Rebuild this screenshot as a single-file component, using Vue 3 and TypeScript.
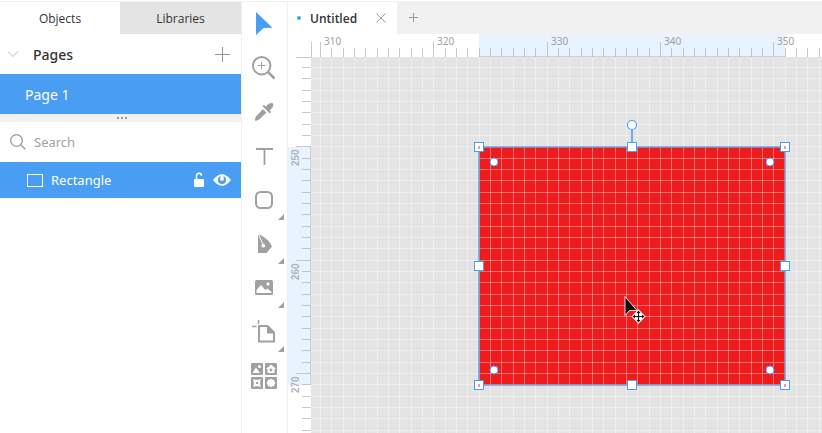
<script setup lang="ts">
import { computed, onBeforeUnmount, onMounted, ref } from 'vue'

interface Tick {
  pos: number
  major: boolean
  label: number
}

const STEP = 11.335
const RULER = 23
const LABEL_ROOM = 22
const search = ref('')
const panel = ref<'objects' | 'libraries'>('objects')

const workspace = ref<SVGSVGElement | null>(null)
const size = ref({ width: 0, height: 0 })
let observer: ResizeObserver | undefined

function measure() {
  const box = workspace.value?.getBoundingClientRect()
  if (box) size.value = { width: box.width, height: box.height }
}

onMounted(() => {
  measure()
  observer = new ResizeObserver(measure)
  if (workspace.value) observer.observe(workspace.value)
})
onBeforeUnmount(() => observer?.disconnect())

/* Ruler ticks that fit in `length`; `origin` is the pixel at which the value `start` sits. */
function makeTicks(origin: number, start: number, length: number): Tick[] {
  const count = Math.max(0, Math.ceil((length - origin) / STEP))
  return Array.from({ length: count }, (_, i) => ({
    pos: Math.round(origin + i * STEP),
    major: (start + i) % 10 === 0,
    label: start + i,
  }))
}

const columns = computed(() => makeTicks(32, 310, size.value.width))
const rows = computed(() => makeTicks(33, 243, size.value.height))
const columnLabels = computed(() => columns.value.filter((t) => t.major && t.pos + LABEL_ROOM < size.value.width))
const rowLabels = computed(() => rows.value.filter((t) => t.major && t.pos + LABEL_ROOM < size.value.height))

const shape = { x: 191, y: 113, width: 306, height: 238 }
const right = shape.x + shape.width
const bottom = shape.y + shape.height
const midX = shape.x + shape.width / 2
const midY = shape.y + shape.height / 2

const corners = [
  [shape.x, shape.y],
  [right, shape.y],
  [shape.x, bottom],
  [right, bottom],
]
const handles = [...corners, [midX, shape.y], [midX, bottom], [shape.x, midY], [right, midY]]
const radii = [
  [shape.x + 15, shape.y + 15],
  [right - 15, shape.y + 15],
  [shape.x + 15, bottom - 15],
  [right - 15, bottom - 15],
]
</script>

<template>
  <div class="app">
    <aside class="sidebar">
      <div class="panel-tabs">
        <button class="panel-tab" :class="{ active: panel === 'objects' }" @click="panel = 'objects'">Objects</button>
        <button class="panel-tab" :class="{ active: panel === 'libraries' }" @click="panel = 'libraries'">Libraries</button>
      </div>
      <div class="pages-head">
        <button class="icon-button" aria-label="Collapse pages">
          <svg width="12" height="8"><path d="M1 1.500 6 6.500 11 1.500" fill="none" stroke="#bdbdbd" /></svg>
        </button>
        <h2>Pages</h2>
        <button class="icon-button" aria-label="Add page">
          <svg width="15" height="15"><path d="M7.500 0V15M0 7.500H15" stroke="#959595" /></svg>
        </button>
      </div>
      <button class="page-row">Page 1</button>
      <div class="splitter"><i /><i /><i /></div>
      <label class="search">
        <svg width="16" height="16" fill="none" stroke="#9a9a9a" stroke-width="1.300">
          <circle cx="6.500" cy="6.500" r="5.800" /><path d="m10.700 10.700 4.600 4.600" />
        </svg>
        <input v-model="search" type="text" placeholder="Search" aria-label="Search" />
      </label>
      <div class="object-row">
        <svg width="16" height="13"><rect x="0.500" y="0.500" width="15" height="12" fill="none" stroke="#fff" /></svg>
        <span class="object-name">Rectangle</span>
        <button class="icon-button" aria-label="Lock">
          <svg width="12" height="16">
            <rect x="1" y="7" width="10" height="8" rx="1" fill="#fff" />
            <path d="M3.500 7V4Q3.500 1.200 6 1.200T8.500 3.800" fill="none" stroke="#fff" stroke-width="1.500" />
          </svg>
        </button>
        <button class="icon-button" aria-label="Hide">
          <svg width="18" height="12">
            <path d="M0 6Q9-5.500 18 6Q9 17.500 0 6Z" fill="#fff" />
            <circle cx="9" cy="6" r="4" fill="#499df3" />
            <circle cx="9" cy="5" r="1.900" fill="#fff" /><path d="M7.600 1.800h2.800v3H7.600z" fill="#fff" />
          </svg>
        </button>
      </div>
    </aside>

    <nav class="toolbar" aria-label="Tools">
      <button class="tool" aria-label="Select">
        <svg viewBox="0 0 44 44"><path d="M14 10 30.500 25.800 21.500 26 14 33Z" fill="#499df3" /></svg>
      </button>
      <button class="tool" aria-label="Zoom">
        <svg viewBox="0 0 44 44" fill="none" stroke="#a0a0a0">
          <circle cx="19.700" cy="19.700" r="8.700" stroke-width="2" />
          <path d="M19.500 15.500v8M15.500 19.500h8" /><path d="m26 26 6.500 6.500" stroke-width="2.500" />
        </svg>
      </button>
      <button class="tool" aria-label="Pick colour">
        <svg viewBox="0 0 44 44">
          <path d="M20.500 16.300 22 15l1.800 1.500 3.200-3Q30 12.500 31 13.500T30.500 17.500L27.700 20.500 29.200 22 27.800 23.500Z" fill="#a0a0a0" />
          <path d="M22 20.300 16 26.300Q14.500 27.800 14.300 29.700" fill="none" stroke="#a0a0a0" stroke-width="3" />
          <path d="m21.300 19.700 3 3-6.800 6.500-3.700 1.800-.8-.8 1.500-3.700Z" fill="#a0a0a0" />
        </svg>
      </button>
      <button class="tool" aria-label="Text">
        <svg viewBox="0 0 44 44"><path d="M14 14h17v2H23.400V31h-1.800V16H14Z" fill="#a0a0a0" /></svg>
      </button>
      <button class="tool" aria-label="Shape">
        <svg viewBox="0 0 44 44">
          <rect x="14" y="14" width="16" height="16" rx="4.500" fill="none" stroke="#a0a0a0" stroke-width="2" />
          <path d="M42 36v6h-6Z" fill="#a0a0a0" />
        </svg>
      </button>
      <button class="tool" aria-label="Pen">
        <svg viewBox="0 0 44 44">
          <path d="M16 13.500V31h8.500l5.500-6.500Q28 18 17.500 12.500Z" fill="#a0a0a0" />
          <path d="m16.500 12 4.500 11" stroke="#fff" /><circle cx="21.300" cy="23.700" r="1.900" fill="#fff" />
          <path d="M42 36v6h-6Z" fill="#a0a0a0" />
        </svg>
      </button>
      <button class="tool" aria-label="Image">
        <svg viewBox="0 0 44 44">
          <rect x="13" y="14" width="18" height="15" rx="1.500" fill="#a0a0a0" />
          <path d="M14.500 27v-3l4.500-5 4.500 5 2-1.500 4 3.500v1Z" fill="#fff" /><circle cx="26" cy="18" r="1.700" fill="#fff" />
          <path d="M42 36v6h-6Z" fill="#a0a0a0" />
        </svg>
      </button>
      <button class="tool" aria-label="Artboard">
        <svg viewBox="0 0 44 44">
          <path d="M17 16h8.500l6.500 6.500V31.500H17Z" fill="none" stroke="#a0a0a0" stroke-width="2" />
          <path d="M25 15.500v8h8Z" fill="#a0a0a0" /><path d="M16.500 10v4M10 16.500h4.500" stroke="#a0a0a0" stroke-width="1.500" />
          <path d="M42 36v6h-6Z" fill="#a0a0a0" />
        </svg>
      </button>
      <button class="tool" aria-label="Resources">
        <svg viewBox="0 0 44 44">
          <g fill="#a0a0a0">
            <rect x="9" y="9" width="12" height="12" rx="1" /><rect x="23" y="9" width="12" height="12" rx="1" />
            <rect x="9" y="23" width="12" height="12" rx="1" /><rect x="23" y="23" width="12" height="12" rx="1" />
          </g>
          <g fill="#fff">
            <path d="m10.500 19 3.500-5.500 4 5.500Z" /><circle cx="17.500" cy="12.500" r="1.500" />
            <path d="m29 10.500 5 4.500h-1.500v4h-7v-4H24Z" />
            <path d="m11 25 2.500.8h3L19 25l-.8 2.500v3L19 33l-2.500-.8h-3L11 33l.8-2.500v-3Z" />
            <path d="m29 24.500 1.300 1.300 2-.1.100 2 1.300 1.300-1.300 1.300-.1 2-2-.1L29 33.500l-1.300-1.300-2 .1-.1-2L24.300 29l1.300-1.300.1-2 2 .1Z" />
          </g>
          <circle cx="29" cy="16" r="1.400" fill="#a0a0a0" /><circle cx="15" cy="29" r="1.300" fill="#a0a0a0" />
        </svg>
      </button>
    </nav>

    <main class="editor">
      <div class="doc-tabs">
        <div class="doc-tab">
          <span class="unsaved" />
          <button class="doc-name">Untitled</button>
          <button class="icon-button" aria-label="Close">
            <svg width="10" height="10"><path d="m.5.5 9 9M9.500.5l-9 9" stroke="#999" /></svg>
          </button>
        </div>
        <button class="icon-button new-tab" aria-label="New document">
          <svg width="9" height="9"><path d="M4.500 0v9M0 4.500h9" stroke="#999" /></svg>
        </button>
      </div>

      <svg ref="workspace" class="workspace" role="img" aria-label="Canvas with rulers">
        <rect :x="RULER" :y="RULER" width="100%" height="100%" fill="#e4e4e4" />
        <rect :x="shape.x" y="0" :width="shape.width" :height="RULER" fill="#e9f3fe" />
        <rect x="0" :y="shape.y" :width="RULER" :height="shape.height" fill="#e9f3fe" />
        <rect v-bind="shape" fill="#ee1c1c" />

        <g class="crisp">
          <g fill="#fff" fill-opacity="0.360">
            <rect v-for="c in columns" :key="c.label" :x="c.pos" :y="RULER" width="1" height="100%" />
            <rect v-for="r in rows" :key="r.label" :x="RULER" :y="r.pos" width="100%" height="1" />
          </g>
          <g fill="#a2a6aa" fill-opacity="0.600">
            <rect v-for="c in columns" :key="c.label" :x="c.pos" :y="c.major ? 8 : 14" width="1" :height="c.major ? 15 : 9" />
            <rect v-for="r in rows" :key="r.label" :x="r.major ? 8 : 14" :y="r.pos" :width="r.major ? 15 : 9" height="1" />
            <rect x="23" y="8" width="1" height="15" />
            <rect x="8" y="23" width="15" height="1" />
          </g>
          <g fill="#a2b2c4" fill-opacity="0.500">
            <rect :x="shape.x" y="22" :width="shape.width" height="1" />
            <rect x="22" :y="shape.y" width="1" :height="shape.height" />
          </g>
        </g>

        <text v-for="c in columnLabels" :key="c.label" class="ruler-label" :x="c.pos + 4" y="11">{{ c.label }}</text>
        <text
          v-for="r in rowLabels"
          :key="r.label"
          class="ruler-label side"
          :transform="`translate(11 ${r.pos + 20}) rotate(-90)`"
        >{{ r.label }}</text>

        <g stroke="#499df3">
          <rect v-bind="shape" fill="none" stroke="#6f9fe0" stroke-width="1.500" />
          <path :d="`M${midX} ${shape.y - 18}v18`" stroke-width="1.500" />
          <circle :cx="midX" :cy="shape.y - 22" r="4.500" fill="#fff" stroke-width="1.200" />
          <rect v-for="([x, y], i) in handles" :key="i" :x="x - 4.5" :y="y - 4.5" width="9" height="9" fill="#fff" />
          <circle v-for="([x, y], i) in radii" :key="i" :cx="x" :cy="y" r="4" fill="#fff" />
        </g>
        <rect v-for="([x, y], i) in corners" :key="i" :x="x - 1" :y="y - 1" width="2" height="3" fill="#ee9c9c" />

        <g transform="translate(336 262)">
          <path d="M1 .5v19l4.500-5H13Z" fill="#111" stroke="#fff" stroke-width=".8" />
          <path d="m14.500 13.300 7.200 7.200-7.200 7.200-7.200-7.200Z" fill="#fff" />
          <path d="M14.500 16v9M10 20.500h9" stroke="#111" stroke-width="1.200" />
          <path d="m14.500 14.500 2 2.500h-4ZM14.500 26.500l2-2.500h-4ZM8.500 20.500l2.500-2v4ZM20.500 20.500l-2.500-2v4Z" fill="#111" />
        </g>
      </svg>
    </main>
  </div>
</template>

<style>
body {
  background: #fff;
}
</style>

<style scoped>
.app {
  display: grid;
  grid-template-columns: 242px 46px minmax(0, 1fr);
  box-sizing: border-box;
  height: 100vh;
  padding-top: 1px;
  overflow: hidden;
  font-family: "Noto Sans", "Open Sans", sans-serif;
  font-size: 13px;
  color: #333;
}

button {
  padding: 0;
  border: 0;
  background: none;
  color: inherit;
  font: inherit;
}

svg {
  display: block;
}

.icon-button {
  display: flex;
}

.sidebar,
.toolbar {
  border-top: 1px solid #f1f1f1;
  border-right: 1px solid #f1f1f1;
}

.panel-tabs {
  display: grid;
  grid-template-columns: 120px 1fr;
  height: 32px;
}

.panel-tab {
  background: #e4e4e4;
  font-family: "Open Sans", "Noto Sans", sans-serif;
  font-size: 12px;
  font-weight: 500;
}

.panel-tab.active {
  background: #fff;
}

.pages-head {
  display: flex;
  align-items: center;
  height: 40px;
  padding: 0 11px 0 7px;
}

.pages-head h2 {
  flex: 1;
  margin: 0 0 0 14px;
  font-size: 14px;
  font-weight: 500;
}

.page-row {
  display: block;
  width: 100%;
  height: 40px;
  padding-left: 25px;
  background: #499df3;
  color: #fff;
  font-size: 14px;
  text-align: left;
}

.splitter {
  display: flex;
  justify-content: center;
  gap: 2px;
  height: 5px;
  padding: 3px 0 0 2px;
  background: #f1f1f1;
}

.splitter i {
  width: 2px;
  height: 2px;
  background: #999;
}

.search {
  display: flex;
  align-items: center;
  gap: 8px;
  height: 40px;
  padding: 0 10px;
}

.search input {
  flex: 1;
  min-width: 0;
  padding: 0;
  border: 0;
  outline: 0;
  background: none;
  font: inherit;
}

.search input::placeholder {
  color: #a0a0a0;
  opacity: 1;
}

.object-row {
  display: flex;
  align-items: center;
  gap: 8px;
  height: 36px;
  padding: 0 10px 0 27px;
  background: #499df3;
  color: #fff;
}

.object-name {
  flex: 1;
}

.tool {
  display: block;
  width: 44px;
  height: 44px;
}

.tool svg {
  width: 44px;
  height: 44px;
}

.editor {
  display: flex;
  flex-direction: column;
  min-width: 0;
  min-height: 0;
}

.doc-tabs {
  display: flex;
  height: 33px;
  background: #f1f1f1;
}

.doc-tab {
  display: flex;
  align-items: center;
  box-sizing: border-box;
  width: 109px;
  padding: 0 11px 0 9px;
  border-top: 1px solid #f1f1f1;
  background: #fff;
}

.unsaved {
  width: 4px;
  height: 4px;
  border-radius: 50%;
  background: #499df3;
}

.doc-name {
  flex: 1;
  padding-left: 9px;
  font-family: "Open Sans", "Noto Sans", sans-serif;
  font-size: 12px;
  font-weight: 600;
  text-align: left;
}

.new-tab {
  align-items: center;
  padding: 0 12px;
}

.workspace {
  flex: 1;
  width: 100%;
  min-height: 0;
}

.crisp {
  shape-rendering: crispEdges;
}

.ruler-label {
  fill: #a0a0a0;
  font-size: 10px;
}

.side {
  font-family: "Liberation Sans", sans-serif;
  font-weight: 700;
  fill: #b0b6bc;
}
</style>
